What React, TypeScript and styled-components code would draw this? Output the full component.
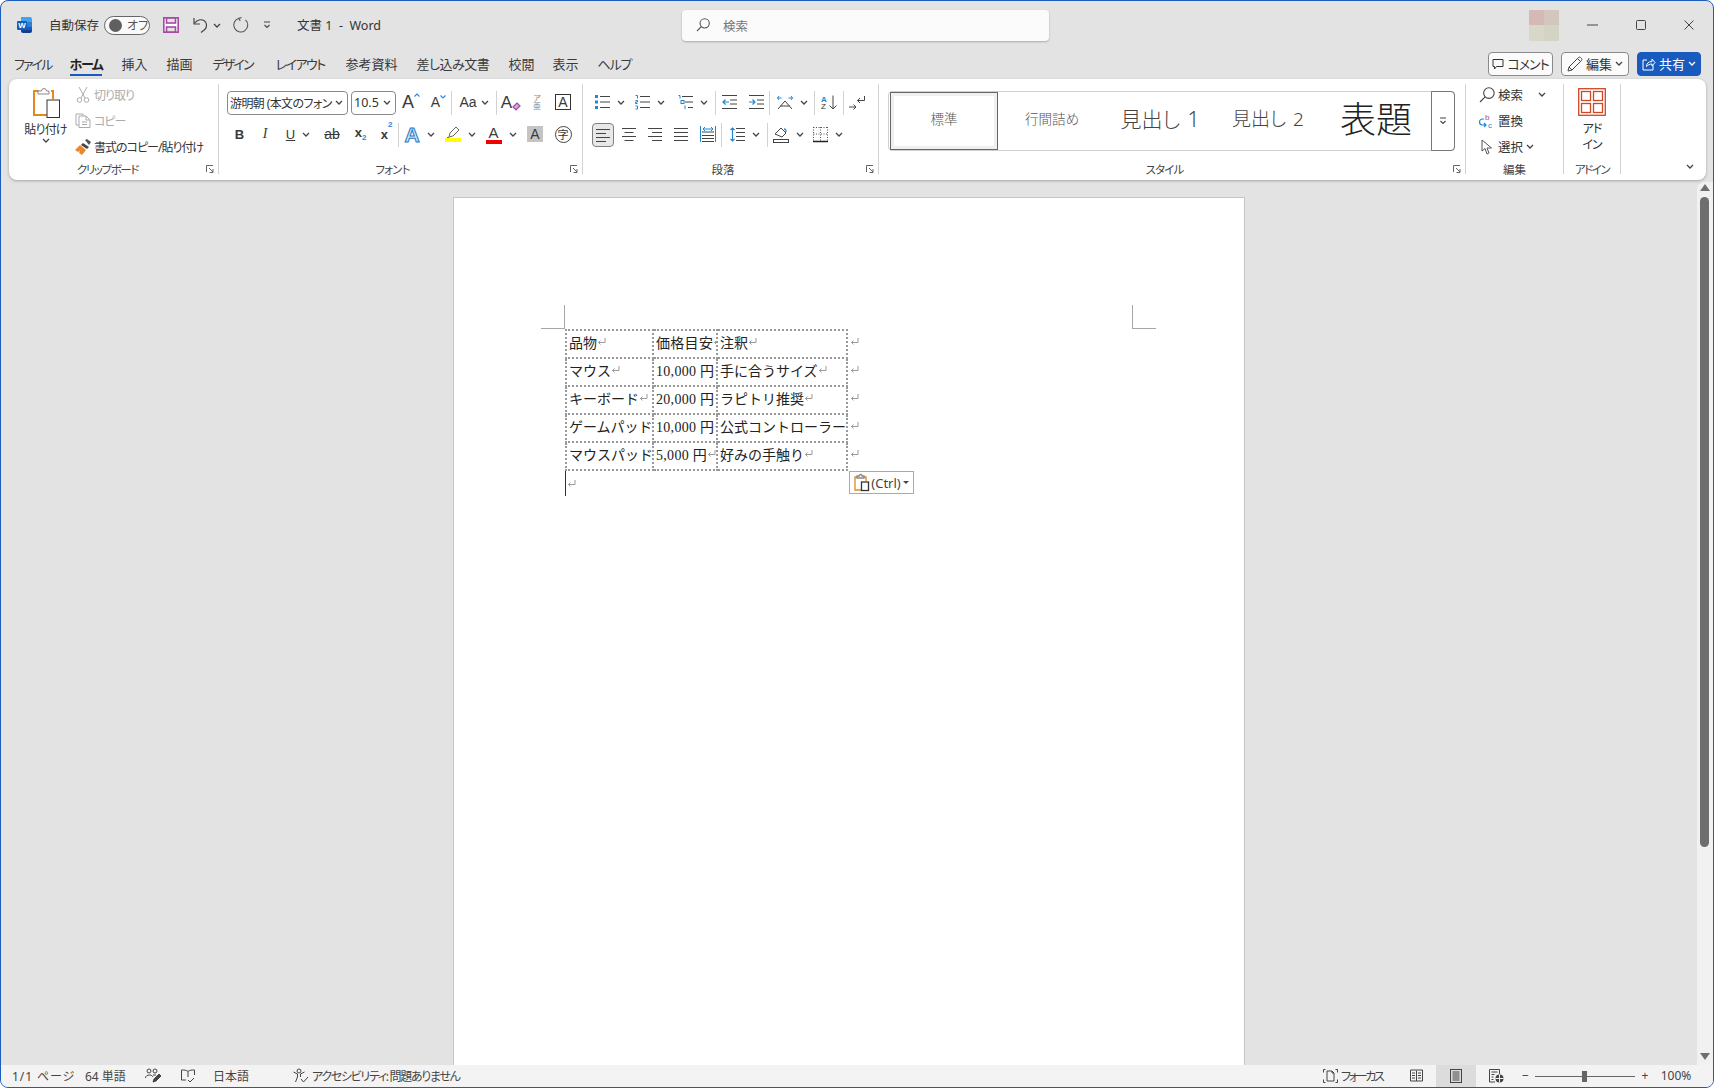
import React from 'react';
import styled, { createGlobalStyle } from 'styled-components';

const uiFont = `"Noto Sans", "Noto Sans CJK JP", sans-serif`;
const docFont = `"Liberation Serif", "Noto Sans CJK JP", serif`;
const latin = `"Liberation Sans", sans-serif`;

const GlobalStyle = createGlobalStyle`
  html, body {
    margin: 0;
    padding: 0;
    background: #fff;
  }
  body {
    font-family: ${uiFont};
    font-feature-settings: "palt";
    color: #3a3a3a;
    font-size: 12px;
    overflow: hidden;
  }
  * { box-sizing: border-box; }
  svg { display: block; flex: none; overflow: visible; }
`;

const Window = styled.div`
  width: 1714px;
  height: 1088px;
  display: flex;
  flex-direction: column;
  background: #e3e3e3;
  border: 1px solid #1a5dbd;
  border-radius: 8px;
  overflow: hidden;
`;

/* title bar */
const TitleBar = styled.header`
  height: 48px;
  flex: none;
  display: flex;
  align-items: center;
  padding-left: 16px;
`;

const Spaced = styled.div<{ $ml: number }>`
  margin-left: ${(p) => p.$ml}px;
  display: flex;
  align-items: center;
  flex: none;
`;

const TitleText = styled.span<{ $w: number }>`
  width: ${(p) => p.$w}px;
  margin-top: -2px;
  font-size: 12.5px;
  white-space: nowrap;
  color: #333;
`;

const Toggle = styled.div`
  width: 46px;
  height: 19px;
  border: 1px solid #666;
  border-radius: 10px;
  background: #fafafa;
  display: flex;
  align-items: center;
  padding-left: 4px;
  font-size: 12px;
  white-space: nowrap;
  gap: 5px;
  color: #555;
`;

const ToggleKnob = styled.span`
  width: 13px;
  height: 13px;
  flex: none;
  border-radius: 50%;
  background: #5f5f5f;
`;

const SearchBox = styled.div`
  width: 367px;
  height: 31px;
  background: #fbfbfb;
  border-radius: 4px;
  box-shadow: 0 1px 2px rgba(0, 0, 0, 0.25);
  display: flex;
  align-items: center;
  padding-left: 14px;
  gap: 13px;
  color: #777;
  font-size: 12.5px;
`;

const Avatar = styled.div`
  width: 30px;
  height: 31px;
  display: grid;
  grid-template-columns: 1fr 1fr;
  grid-template-rows: 1fr 1fr;
`;

const AvatarCell = styled.span<{ $c: string }>`
  background: ${(p) => p.$c};
`;

/* tab row */
const TabRow = styled.nav`
  height: 30px;
  flex: none;
  display: flex;
  padding: 0 12px 0 13px;
`;

const Tab = styled.div<{ $w: number }>`
  width: ${(p) => p.$w}px;
  padding-top: 7px;
  flex: none;
`;

const TabText = styled.span<{ $active?: boolean; $ls: number }>`
  display: inline-block;
  font-size: 13px;
  line-height: 17px;
  height: 20px;
  letter-spacing: ${(p) => p.$ls}px;
  white-space: nowrap;
  color: ${(p) => (p.$active ? '#222' : '#3a3a3a')};
  font-weight: ${(p) => (p.$active ? 700 : 400)};
  border-bottom: 2px solid ${(p) => (p.$active ? '#185abd' : 'transparent')};
`;

const TabActions = styled.div`
  margin-left: auto;
  display: flex;
  gap: 8px;
  padding-top: 3px;
`;

const ActionButton = styled.div<{ $w: number; $primary?: boolean; $ls?: number }>`
  width: ${(p) => p.$w}px;
  height: 24px;
  border-radius: 4px;
  border: 1px solid ${(p) => (p.$primary ? '#185abd' : '#8a8a8a')};
  background: ${(p) => (p.$primary ? '#185abd' : '#fbfbfb')};
  color: ${(p) => (p.$primary ? '#fff' : '#333')};
  display: flex;
  align-items: center;
  justify-content: center;
  gap: 3px;
  font-size: 13px;
  letter-spacing: ${(p) => p.$ls ?? 0}px;
  white-space: nowrap;
  padding-bottom: 1px;
`;

/* ribbon */
const Ribbon = styled.section`
  flex: none;
  height: 101px;
  margin: 0 7px 0 8px;
  padding: 5px 0 6px;
  background: #fff;
  border-radius: 8px;
  box-shadow: 0 1px 3px rgba(0, 0, 0, 0.28);
  display: flex;
`;

const Group = styled.div<{ $w: number }>`
  position: relative;
  width: ${(p) => p.$w}px;
  height: 90px;
  flex: none;
  border-right: 1px solid #d2d2d2;
`;

const GroupLabel = styled.div<{ $ls?: number; $pr?: number }>`
  position: absolute;
  left: 0;
  right: 0;
  bottom: -2px;
  padding-right: ${(p) => p.$pr ?? 0}px;
  text-align: center;
  font-size: 11.5px;
  line-height: 12px;
  letter-spacing: ${(p) => p.$ls ?? 0}px;
  color: #444;
  white-space: nowrap;
`;

const Launcher = styled.div`
  position: absolute;
  right: 4px;
  bottom: 1px;
`;

const GroupRow = styled.div`
  display: flex;
  height: 76px;
`;

const PasteColumn = styled.div`
  width: 65px;
  padding: 3px 0 0 8px;
  display: flex;
  flex-direction: column;
  align-items: center;
  font-size: 12px;
  color: #333;
`;

const PasteSlot = styled.span`
  margin-left: 2px;
`;

const PasteLabel = styled.span`
  margin-top: 3px;
  line-height: 17px;
  letter-spacing: -0.8px;
  white-space: nowrap;
`;

const SmallColumn = styled.div<{ $pl?: number }>`
  display: flex;
  flex-direction: column;
  gap: 4px;
  padding-left: ${(p) => p.$pl ?? 0}px;
`;

const SmallItem = styled.div<{ $off?: boolean; $tight?: boolean }>`
  height: 22px;
  display: flex;
  align-items: center;
  gap: 3px;
  font-size: ${(p) => (p.$tight ? 12 : 12.5)}px;
  letter-spacing: ${(p) => (p.$tight ? -1 : 0)}px;
  padding-bottom: 1px;
  white-space: nowrap;
  color: ${(p) => (p.$off ? '#ababab' : '#333')};
`;

const IconSlot = styled.span<{ $w: number }>`
  width: ${(p) => p.$w}px;
  display: flex;
  justify-content: center;
  flex: none;
`;

const ToolStack = styled.div<{ $pl: number }>`
  padding: 7px 0 0 ${(p) => p.$pl}px;
  display: flex;
  flex-direction: column;
  gap: 8px;
`;

const ToolRow = styled.div`
  height: 24px;
  display: flex;
  align-items: center;
`;

const Tool = styled.div<{ $w: number; $gap?: number }>`
  width: ${(p) => p.$w}px;
  height: 24px;
  flex: none;
  display: flex;
  align-items: center;
  justify-content: center;
  gap: ${(p) => p.$gap ?? 7}px;
  padding-bottom: 2px;
`;

const PressedBox = styled.div`
  width: 22px;
  height: 24px;
  flex: none;
  margin-top: 2px;
  border: 1px solid #7f7f7f;
  border-radius: 4px;
  background: #e8e8e8;
  display: flex;
  align-items: center;
  justify-content: center;
`;

const ToolSep = styled.span`
  width: 1px;
  height: 24px;
  background: #d2d2d2;
  flex: none;
`;

const ComboBox = styled.div<{ $w: number; $ls?: number; $size?: number }>`
  width: ${(p) => p.$w}px;
  height: 24px;
  border: 1px solid #8a8a8a;
  border-radius: 4px;
  display: flex;
  align-items: center;
  justify-content: space-between;
  padding: 0 4px 1px 2px;
  font-size: ${(p) => p.$size ?? 12.5}px;
  letter-spacing: ${(p) => p.$ls ?? 0}px;
  white-space: nowrap;
  color: #333;
  flex: none;
`;

const Letter = styled.span<{
  $size: number;
  $color?: string;
  $bold?: boolean;
  $italic?: boolean;
  $under?: boolean;
  $strike?: boolean;
  $serif?: boolean;
  $outline?: string;
}>`
  font-family: ${(p) => (p.$serif ? `"Liberation Serif", serif` : latin)};
  font-size: ${(p) => p.$size}px;
  line-height: 1;
  color: ${(p) => p.$color ?? '#3a3a3a'};
  font-weight: ${(p) => (p.$bold ? 700 : 400)};
  font-style: ${(p) => (p.$italic ? 'italic' : 'normal')};
  text-decoration: ${(p) => (p.$under ? 'underline' : p.$strike ? 'line-through' : 'none')};
  -webkit-text-stroke: ${(p) => (p.$outline ? `1px ${p.$outline}` : '0')};
`;

const LetterWrap = styled.span<{ $low?: boolean }>`
  display: flex;
  align-items: ${(p) => (p.$low ? 'flex-end' : 'flex-start')};
`;

const Script = styled.span<{ $up?: boolean }>`
  font-family: ${latin};
  font-size: 8px;
  line-height: 1;
  color: #2b88d8;
  margin-top: ${(p) => (p.$up ? -7 : 8)}px;
  font-weight: 700;
`;

const Furigana = styled.span`
  display: flex;
  flex-direction: column;
  align-items: center;
  color: #8a8a8a;
  line-height: 8px;
  font-size: 8px;
`;

const BoxLetter = styled.span`
  width: 16px;
  height: 16px;
  border: 1px solid #333;
  display: flex;
  align-items: center;
  justify-content: center;
`;

const ColorLetter = styled.span<{ $bar: string }>`
  width: 16px;
  display: flex;
  flex-direction: column;
  align-items: center;
  line-height: 1;
  &::after {
    content: '';
    width: 16px;
    height: 4px;
    background: ${(p) => p.$bar};
  }
`;

const ShadedLetter = styled.span`
  width: 16px;
  height: 16px;
  background: #c4c4c4;
  display: flex;
  align-items: center;
  justify-content: center;
`;

const CircleLetter = styled.span`
  width: 17px;
  height: 17px;
  border: 1px solid #444;
  border-radius: 50%;
  display: flex;
  align-items: center;
  justify-content: center;
  font-size: 11px;
  line-height: 1;
  color: #333;
`;

/* style gallery */
const Gallery = styled.div`
  margin: 7px 0 0 9px;
  width: 567px;
  height: 60px;
  border: 1px solid #d0d0d0;
  border-radius: 4px;
  display: flex;
  align-items: stretch;
  padding-left: 1px;
`;

const GalleryItem = styled.div<{ $size: number; $active?: boolean; $color?: string }>`
  width: 108px;
  flex: none;
  display: flex;
  align-items: center;
  justify-content: center;
  padding-bottom: 3px;
  font-size: ${(p) => p.$size}px;
  font-weight: 300;
  word-spacing: 2px;
  color: ${(p) => p.$color ?? '#333'};
  border: ${(p) => (p.$active ? '1px solid #666' : 'none')};
  box-shadow: ${(p) => (p.$active ? 'inset 0 0 0 3px #f0f0f0' : 'none')};
  white-space: nowrap;
  line-height: 1;
`;

const GalleryMore = styled.div`
  width: 24px;
  margin: -1px -1px -1px auto;
  border: 1px solid #777;
  border-radius: 0 4px 4px 0;
  display: flex;
  align-items: center;
  justify-content: center;
`;

const AddInColumn = styled.div`
  padding-top: 4px;
  display: flex;
  flex-direction: column;
  align-items: center;
  font-size: 12px;
  line-height: 16px;
  letter-spacing: -1px;
  text-align: center;
  color: #333;
`;

const AddInText = styled.span`
  margin-top: 5px;
`;

const RibbonEnd = styled.div`
  flex: 1;
  display: flex;
  align-items: flex-end;
  justify-content: flex-end;
  padding: 0 12px 5px 0;
`;

/* document area */
const Workspace = styled.main`
  flex: 1;
  min-height: 0;
  display: flex;
`;

const PageArea = styled.div`
  flex: 1;
  min-width: 0;
  padding-top: 17px;
  display: flex;
  justify-content: center;
`;

const Page = styled.div`
  width: 792px;
  background: #fff;
  border: 1px solid #c6c6c6;
  border-bottom: none;
  padding: 131px 0 0 111px;
  position: relative;
`;

const CropMark = styled.div<{ $right?: boolean }>`
  position: absolute;
  top: 107px;
  width: 24px;
  height: 24px;
  border-bottom: 1px solid #a6a6a6;
  ${(p) =>
    p.$right
      ? 'left: 678px; border-left: 1px solid #a6a6a6;'
      : 'left: 87px; border-right: 1px solid #a6a6a6;'}
`;

const DocTable = styled.table`
  border-collapse: collapse;
  table-layout: fixed;
  width: 304px;
  font-family: ${docFont};
  font-feature-settings: normal;
  font-size: 14px;
  color: #222;
`;

const DocCell = styled.td<{ $w: number; $bare?: boolean; $ls?: number }>`
  width: ${(p) => p.$w}px;
  height: 28px;
  padding: 0 0 5px 2px;
  white-space: nowrap;
  overflow: hidden;
  letter-spacing: ${(p) => p.$ls ?? 0}px;
  border: ${(p) => (p.$bare ? 'none' : '2px dotted #999')};
`;

const CellInner = styled.span`
  display: inline-flex;
  align-items: center;
`;

const CursorLine = styled.div`
  width: 200px;
  height: 25px;
  border-left: 1px solid #333;
  padding: 8px 0 0 1px;
`;

const PasteTag = styled.div`
  position: absolute;
  left: 395px;
  top: 273px;
  width: 65px;
  height: 23px;
  background: #fff;
  border: 1px solid #aaa;
  display: flex;
  align-items: center;
  justify-content: center;
  gap: 2px;
  font-size: 13px;
  color: #444;
`;

const Caret = styled.span`
  width: 0;
  height: 0;
  border-left: 3px solid transparent;
  border-right: 3px solid transparent;
  border-top: 3px solid #444;
`;

const ScrollTrack = styled.aside`
  width: 16px;
  flex: none;
  margin-top: 2px;
  background: #f1f1f1;
  border-radius: 8px 0 0 0;
  display: flex;
  flex-direction: column;
  align-items: center;
  padding: 2px 1px 5px 0;
`;

const ScrollArrow = styled.span<{ $down?: boolean }>`
  width: 0;
  height: 0;
  border-left: 5px solid transparent;
  border-right: 5px solid transparent;
  ${(p) => (p.$down ? 'border-top: 7px solid #6e6e6e; margin-top: auto;' : 'border-bottom: 7px solid #6e6e6e;')}
`;

const ScrollThumb = styled.div`
  width: 9px;
  height: 650px;
  margin-top: 6px;
  background: #6e6e6e;
  border-radius: 5px;
`;

/* status bar */
const StatusBar = styled.footer`
  height: 22px;
  flex: none;
  background: #f3f3f3;
  display: flex;
  align-items: center;
  padding: 0 16px 0 11px;
  font-size: 12px;
  color: #444;
`;

const StatusItem = styled.div<{ $w?: number; $center?: boolean; $active?: boolean; $ls?: number }>`
  ${(p) => (p.$w ? `width: ${p.$w}px;` : '')}
  height: 22px;
  flex: none;
  display: flex;
  align-items: center;
  gap: 3px;
  padding-bottom: 1px;
  letter-spacing: ${(p) => p.$ls ?? 0}px;
  white-space: nowrap;
  justify-content: ${(p) => (p.$center ? 'center' : 'flex-start')};
  background: ${(p) => (p.$active ? '#dcdcdc' : 'transparent')};
`;

const StatusRight = styled.div`
  margin-left: auto;
  display: flex;
  align-items: center;
`;

const Slider = styled.div`
  position: relative;
  width: 100px;
  height: 1px;
  background: #666;
`;

const SliderThumb = styled.span`
  position: absolute;
  left: 47px;
  top: -5px;
  width: 5px;
  height: 11px;
  background: #666;
`;

/* icons */
type IcProps = { w: number; h: number; stroke?: string; sw?: number; children: React.ReactNode };

const Ic = ({ w, h, stroke = '#444', sw = 1, children }: IcProps) => (
  <svg width={w} height={h} viewBox={`0 0 ${w} ${h}`} fill="none" stroke={stroke} strokeWidth={sw}>
    {children}
  </svg>
);

const Chev = ({ color = '#444' }: { color?: string }) => (
  <Ic w={8} h={5} stroke={color} sw={1.3}>
    <path d="M1 1l3 3 3-3" />
  </Ic>
);

const WordLogo = () => (
  <Ic w={15} h={16} stroke="none">
    <path d="M4 0h9a2 2 0 012 2v4H4z" fill="#41a5ee" />
    <rect x="4" y="5" width="11" height="5" fill="#2b7cd3" />
    <rect x="4" y="10" width="11" height="3" fill="#185abd" />
    <path d="M4 13h11v1a2 2 0 01-2 2H6a2 2 0 01-2-2z" fill="#103f91" />
    <rect x="0" y="4" width="10" height="9" rx="1" fill="#185abd" />
    <text x="5" y="11" fontSize="8" fontWeight="700" fill="#fff" textAnchor="middle" fontFamily={latin}>W</text>
  </Ic>
);

const SaveIcon = () => (
  <Ic w={16} h={16} stroke="#a54aa5" sw={1.6}>
    <rect x="0.8" y="0.8" width="14.4" height="14.4" fill="#fff" />
    <rect x="3.5" y="1" width="9" height="5" fill="#e3e3e3" />
    <rect x="3.5" y="10" width="9" height="5" fill="#e3e3e3" />
  </Ic>
);

const UndoIcon = () => (
  <Ic w={15} h={16} stroke="#444" sw={1.2}>
    <path d="M1 1v6h6" />
    <path d="M1.3 6.5C4 3 8 1.8 11 3.6c3 2 3.4 6 .8 9L8 15.5" />
  </Ic>
);

const RedoIcon = () => (
  <Ic w={16} h={16} stroke="#555" sw={1.1}>
    <path d="M6 1.2A7 7 0 1012.5 2.8" />
    <path d="M8.5 0.6L5.8 1.3l1.4 2.6" />
  </Ic>
);

const CustomizeIcon = () => (
  <Ic w={8} h={8} stroke="#444" sw={1.1}>
    <path d="M1 1h6M1.5 4L4 6.5 6.5 4" />
  </Ic>
);

const SearchGlass = ({ w = 14, color = '#555' }: { w?: number; color?: string }) => (
  <Ic w={w} h={w} stroke={color} sw={1.1}>
    <circle cx={w * 0.62} cy={w * 0.38} r={w * 0.33} />
    <path d={`M${w * 0.38} ${w * 0.62}L1 ${w - 1}`} />
  </Ic>
);

const MinimizeIcon = () => (
  <Ic w={11} h={2}>
    <path d="M0 1h11" />
  </Ic>
);

const MaximizeIcon = () => (
  <Ic w={10} h={10}>
    <rect x="0.5" y="0.5" width="9" height="9" rx="1" />
  </Ic>
);

const CloseIcon = () => (
  <Ic w={10} h={10}>
    <path d="M0.5 0.5l9 9M9.5 0.5l-9 9" />
  </Ic>
);

const CommentIcon = () => (
  <Ic w={12} h={12} stroke="#333">
    <path d="M1 1.5h10v7H4.5L2.5 11V8.5H1z" />
  </Ic>
);

const PencilIcon = () => (
  <Ic w={16} h={16} stroke="#444">
    <path d="M1 15l1-4L11.5 1.5a1.5 1.5 0 012 0l1 1a1.5 1.5 0 010 2L5 14z" />
    <path d="M2 11l3 3M10.5 2.5l3 3" />
  </Ic>
);

const ShareIcon = () => (
  <Ic w={14} h={14} stroke="#fff">
    <path d="M5 3H1v10h10V8" />
    <path d="M4.5 9.5c0-3 2-5 5.5-5V2l3 3.5L10 9V7c-2.5 0-4 1-5.5 2.5z" />
  </Ic>
);

const PasteIcon = () => (
  <svg width={27} height={31} viewBox="0 0 27 31" fill="none">
    <path d="M6 4H1v24h13" stroke="#e3881e" strokeWidth="2" />
    <path d="M18 4h2v8" stroke="#e3881e" strokeWidth="2" />
    <path d="M5 7V4h3.5a2.5 2.5 0 015 0H16v3z" fill="#fff" stroke="#8a8a8a" />
    <rect x="14" y="13" width="12.5" height="17.5" fill="#fff" stroke="#333" />
  </svg>
);

const PasteSmall = () => (
  <Ic w={15} h={17} stroke="#e3881e" sw={1.3}>
    <path d="M3 3H1v13h6M10 3h2v4" />
    <path d="M3 4V2h2a1.5 1.5 0 013 0h2v2z" stroke="#888" fill="#fff" />
    <rect x="7.5" y="8" width="7" height="8.5" stroke="#333" fill="#fff" />
  </Ic>
);

const CutIcon = () => (
  <Ic w={14} h={17} stroke="#ababab">
    <path d="M3 1l6 11M11 1L5 12" />
    <circle cx="3.5" cy="14" r="2.3" />
    <circle cx="10.5" cy="14" r="2.3" />
  </Ic>
);

const CopyIcon = () => (
  <Ic w={16} h={15} stroke="#ababab">
    <path d="M4 12H1V1h7v2" />
    <path d="M4 3h7l4 4v7.5H4zM11 3v4h4M7 9h5M7 11.5h5" />
  </Ic>
);

const BrushIcon = () => (
  <Ic w={16} h={16} stroke="none">
    <path d="M10 1l2-1 4 3-2 3z" fill="#555" />
    <path d="M8 4l6 4-2 2-6-4z" fill="#444" />
    <path d="M5 6l6 5-4 5-3-2 1-2-2 1-3-2z" fill="#f0862a" />
  </Ic>
);

const Launch = () => (
  <Ic w={8} h={8} stroke="#666">
    <path d="M0.5 7V0.5H7M3 3l4 4M7 4v3.5H3.5" />
  </Ic>
);

const TinyCaret = ({ up }: { up?: boolean }) => (
  <Ic w={6} h={4} stroke="#2b88d8" sw={1.1}>
    <path d={up ? 'M0.5 3.5L3 1l2.5 2.5' : 'M0.5 0.5L3 3l2.5-2.5'} />
  </Ic>
);

const EraserMark = () => (
  <Ic w={9} h={9} stroke="#a54aa5" sw={1.2}>
    <path d="M5 1l3 3-4 4-3-3z" fill="#d7a8d7" />
  </Ic>
);

const HighlightPen = () => (
  <Ic w={14} h={12} stroke="#666">
    <path d="M3 11l1-4L10 1l3 3-6 6z" />
    <path d="M1 11.5h2" />
  </Ic>
);

const lines = (ys: number[], x1: number, x2: number) => ys.map((y) => `M${x1} ${y}H${x2}`).join('');

const BulletIcon = () => (
  <Ic w={15} h={14}>
    <path d={lines([1.5, 7, 12.5], 5, 15)} />
    <rect x="0" y="0" width="3" height="3" fill="#1e88d2" stroke="none" />
    <rect x="0" y="5.5" width="3" height="3" fill="#1e88d2" stroke="none" />
    <rect x="0" y="11" width="3" height="3" fill="#1e88d2" stroke="none" />
  </Ic>
);

const NumberIcon = () => (
  <Ic w={15} h={14}>
    <path d={lines([1.5, 7, 12.5], 5, 15)} />
    <path d="M0.5 0.5h2v3M0.5 5.5h2v1.5h-2v1.5h2M0.5 11h2v3h-2" stroke="#1e88d2" />
  </Ic>
);

const MultiIcon = () => (
  <Ic w={15} h={14}>
    <path d="M4 1.5h11M7 7h8M10 12.5h5" />
    <path d="M0.5 0.5h1.5v3" stroke="#1e88d2" />
    <rect x="3" y="5.5" width="3" height="3" stroke="#1e88d2" />
    <path d="M7 10.5v3.5" stroke="#1e88d2" />
  </Ic>
);

const IndentIcon = ({ out }: { out?: boolean }) => (
  <Ic w={15} h={14}>
    <path d={lines([0.5, 13.5], 0, 15) + lines([5, 9], 8, 15)} />
    <path d={out ? 'M7 7H1M3.5 4.5L1 7l2.5 2.5' : 'M0 7h6M3.5 4.5L6 7 3.5 9.5'} stroke="#1e88d2" strokeWidth={1.2} />
  </Ic>
);

const AsianLayoutIcon = () => (
  <Ic w={16} h={15}>
    <path d="M1 14L8 6l7 8M3 11h10" />
    <path d="M0.5 3h4M2 1L0.5 3 2 5M11.5 3h4M14 1l1.5 2L14 5" stroke="#1e88d2" />
  </Ic>
);

const SortIcon = () => (
  <Ic w={16} h={15} stroke="#444">
    <text x="0" y="6.5" fontSize="8" fill="#1e88d2" stroke="none" fontWeight="700" fontFamily={latin}>A</text>
    <text x="0" y="14" fontSize="8" fill="#333" stroke="none" fontFamily={latin}>Z</text>
    <path d="M12 0.5V14M8.5 10.5L12 14l3.5-3.5" />
  </Ic>
);

const EnterIcon = () => (
  <Ic w={16} h={15}>
    <path d="M15.5 1v4.5H8.5M11 3L8.5 5.5 11 8" />
    <path d="M0 12h7M4.5 9.5L7 12l-2.5 2.5" />
  </Ic>
);

const AlignIcon = ({ kind }: { kind: 'left' | 'center' | 'right' | 'justify' }) => {
  const short: Record<string, [number, number]> = {
    left: [0, 10],
    center: [2.5, 11.5],
    right: [4, 14],
    justify: [0, 14],
  };
  const [a, b] = short[kind];
  return (
    <Ic w={14} h={13}>
      <path d={lines([0.5, 8.5], 0, 14) + lines([4.5, 12.5], a, b)} />
    </Ic>
  );
};

const DistributeIcon = () => (
  <Ic w={16} h={16}>
    <path d="M0.5 0v16M15.5 0v16" stroke="#1e88d2" />
    <path d={lines([6, 9.5, 12.5, 15.5], 2, 14)} />
    <path d="M3 3h10M5 1L3 3l2 2M11 1l2 2-2 2" stroke="#1e88d2" />
  </Ic>
);

const LineSpacingIcon = () => (
  <Ic w={15} h={15}>
    <path d={lines([1.5, 5.5, 9.5, 13.5], 6, 15)} />
    <path d="M2.5 1v13M0.5 3l2-2 2 2M0.5 12l2 2 2-2" stroke="#1e88d2" strokeWidth={1.2} />
  </Ic>
);

const FillIcon = () => (
  <Ic w={16} h={17}>
    <path d="M2 8l6-6 5 5-4 4z" />
    <path d="M13 6c0-2 0-3-2-3" stroke="#1e88d2" strokeWidth={1.4} />
    <rect x="0.5" y="13.5" width="15" height="3" />
  </Ic>
);

const BorderIcon = () => (
  <Ic w={15} h={15}>
    <path d="M0.5 0.5h14M0.5 7h14M7.5 0v14M0.5 0v14M14.5 0v14" strokeDasharray="1 1.5" stroke="#555" />
    <path d="M0 14.5h15" stroke="#222" strokeWidth={1.3} />
  </Ic>
);

const ReplaceIcon = () => (
  <Ic w={15} h={16}>
    <text x="6" y="7" fontSize="8" fill="#a54aa5" stroke="none" fontFamily={latin}>b</text>
    <text x="9" y="15" fontSize="8" fill="#1e88d2" stroke="none" fontFamily={latin}>c</text>
    <path d="M5 6H3.5a2.5 2.5 0 000 6H7M5 10l2 2-2 2" stroke="#1e88d2" strokeWidth={1.2} />
  </Ic>
);

const SelectIcon = () => (
  <Ic w={12} h={16} stroke="#555">
    <path d="M1 1v11l3-2.5L6 15l2-1-2-5h4.5z" />
  </Ic>
);

const AddInIcon = () => (
  <Ic w={28} h={28} stroke="#d24726" sw={1.3}>
    <rect x="0.7" y="0.7" width="26.6" height="26.6" />
    <rect x="3.5" y="3.5" width="9" height="9" />
    <rect x="15.5" y="3.5" width="9" height="9" />
    <rect x="3.5" y="15.5" width="9" height="9" />
    <rect x="15.5" y="15.5" width="9" height="9" />
  </Ic>
);

const ReturnMark = () => (
  <Ic w={9} h={9} stroke="#9a9a9a">
    <path d="M8 1v4.5H1.5M3.5 3.5l-2 2 2 2" />
  </Ic>
);

const TrackIcon = () => (
  <Ic w={16} h={15}>
    <circle cx="4" cy="3" r="2" />
    <circle cx="10" cy="3" r="2" />
    <path d="M0.5 10c0-2 2-3 4-3s3 1 3.5 2M8 7h3" />
    <path d="M8 14l1-3 5-5 2 2-5 5z" fill="#444" />
  </Ic>
);

const ProofIcon = () => (
  <Ic w={14} h={14}>
    <path d="M7 2.5C5.5 1 3 1 0.5 1v10H5M7 2.5C8.5 1 11 1 13.5 1v5M7 2.5V8" />
    <path d="M7 11l2 2 4-4" />
  </Ic>
);

const A11yIcon = () => (
  <Ic w={16} h={16}>
    <circle cx="6" cy="3" r="2" />
    <path d="M0.5 4l4 2v3l-2 5M11.5 4l-4 2v3" />
    <path d="M8 11l2.5 3 4.5-5" />
  </Ic>
);

const FocusIcon = () => (
  <Ic w={15} h={14}>
    <path d="M2.5 0.5h-2v3M12.5 0.5h2v3M2.5 13.5h-2v-3M12.5 13.5h2v-3" />
    <path d="M4 12V2h5l2 2v8zM9 2v2h2" />
  </Ic>
);

const ReadIcon = () => (
  <Ic w={13} h={13}>
    <path d="M6.5 1.5V12M0.5 1h6M6.5 1h6M0.5 12h12M0.5 1v11M12.5 1v11M2 4h3M2 6.5h3M2 9h3M8 4h3M8 6.5h3M8 9h3" />
  </Ic>
);

const PrintIcon = () => (
  <Ic w={12} h={14}>
    <rect x="0.5" y="0.5" width="11" height="13" />
    <path d={lines([3, 5, 7, 9, 11], 2.5, 9.5)} />
  </Ic>
);

const WebIcon = () => (
  <Ic w={15} h={14}>
    <path d="M6 13H0.5V0.5h10V5M2.5 3h6M2.5 5.5h3M2.5 8h2M2.5 10.5h2" />
    <circle cx="10.5" cy="9.5" r="4" fill="#444" stroke="none" />
    <path d="M6.5 9.5h8M10.5 5.5v8" stroke="#f3f3f3" />
  </Ic>
);

const TabItems: [string, number, number][] = [
  ['ファイル', 55.5, -1.9],
  ['ホーム', 52, -1.4],
  ['挿入', 45, 0],
  ['描画', 46, 0],
  ['デザイン', 63, -1.9],
  ['レイアウト', 70, -1.5],
  ['参考資料', 71, 0],
  ['差し込み文書', 92, -0.5],
  ['校閲', 44, 0],
  ['表示', 45, 0],
  ['ヘルプ', 45, -1.1],
];

const TableRows = [
  ['品物', '価格目安', '注釈'],
  ['マウス', '10,000 円', '手に合うサイズ'],
  ['キーボード', '20,000 円', 'ラピトリ推奨'],
  ['ゲームパッド', '10,000 円', '公式コントローラー'],
  ['マウスパッド', '5,000 円', '好みの手触り'],
];

const ColumnWidths = [87, 64, 130];

const App = () => (
  <>
    <GlobalStyle />
    <Window>
      <TitleBar>
        <WordLogo />
        <Spaced $ml={17}>
          <TitleText $w={48}>自動保存</TitleText>
        </Spaced>
        <Spaced $ml={7}>
          <Toggle>
            <ToggleKnob />
            オフ
          </Toggle>
        </Spaced>
        <Spaced $ml={13}><SaveIcon /></Spaced>
        <Spaced $ml={14}><UndoIcon /></Spaced>
        <Spaced $ml={5}><Chev /></Spaced>
        <Spaced $ml={12}><RedoIcon /></Spaced>
        <Spaced $ml={14}><CustomizeIcon /></Spaced>
        <Spaced $ml={26}>
          <TitleText $w={85}>文書 1{'\u00a0\u00a0'}-{'\u00a0\u00a0'}Word</TitleText>
        </Spaced>
        <Spaced $ml={300}>
          <SearchBox>
            <SearchGlass />
            検索
          </SearchBox>
        </Spaced>
        <Spaced $ml={480}>
          <Avatar>
            <AvatarCell $c="#d5b9b7" />
            <AvatarCell $c="#d3c6bc" />
            <AvatarCell $c="#d9d8c8" />
            <AvatarCell $c="#d4d4c4" />
          </Avatar>
        </Spaced>
        <Spaced $ml={28}><MinimizeIcon /></Spaced>
        <Spaced $ml={38}><MaximizeIcon /></Spaced>
        <Spaced $ml={38}><CloseIcon /></Spaced>
      </TitleBar>

      <TabRow>
        {TabItems.map(([label, w, ls]) => (
          <Tab key={label} $w={w}>
            <TabText $active={label === 'ホーム'} $ls={ls}>{label}</TabText>
          </Tab>
        ))}
        <TabActions>
          <ActionButton $w={65} $ls={-1}>
            <CommentIcon />
            コメント
          </ActionButton>
          <ActionButton $w={68}>
            <PencilIcon />
            編集
            <Chev />
          </ActionButton>
          <ActionButton $w={64} $primary>
            <ShareIcon />
            共有
            <Chev color="#fff" />
          </ActionButton>
        </TabActions>
      </TabRow>

      <Ribbon>
        <Group $w={210}>
          <GroupRow>
            <PasteColumn>
              <PasteSlot><PasteIcon /></PasteSlot>
              <PasteLabel>貼り付け</PasteLabel>
              <Chev />
            </PasteColumn>
            <SmallColumn>
              <SmallItem $off $tight>
                <IconSlot $w={17}><CutIcon /></IconSlot>
                切り取り
              </SmallItem>
              <SmallItem $off $tight>
                <IconSlot $w={17}><CopyIcon /></IconSlot>
                コピー
              </SmallItem>
              <SmallItem $tight>
                <IconSlot $w={17}><BrushIcon /></IconSlot>
                書式のコピー/貼り付け
              </SmallItem>
            </SmallColumn>
          </GroupRow>
          <GroupLabel $ls={-1.4} $pr={12}>クリップボード</GroupLabel>
          <Launcher><Launch /></Launcher>
        </Group>

        <Group $w={364}>
          <ToolStack $pl={8}>
            <ToolRow>
              <ComboBox $w={121} $size={12} $ls={-0.6}>游明朝 (本文のフォン<Chev /></ComboBox>
              <Spaced $ml={3}>
                <ComboBox $w={45}>10.5<Chev /></ComboBox>
              </Spaced>
              <Tool $w={30}>
                <LetterWrap>
                  <Letter $size={18}>A</Letter>
                  <TinyCaret up />
                </LetterWrap>
              </Tool>
              <Tool $w={25}>
                <LetterWrap>
                  <Letter $size={14}>A</Letter>
                  <TinyCaret />
                </LetterWrap>
              </Tool>
              <ToolSep />
              <Tool $w={44} $gap={4}>
                <Letter $size={14}>Aa</Letter>
                <Chev />
              </Tool>
              <ToolSep />
              <Tool $w={28}>
                <LetterWrap $low>
                  <Letter $size={17}>A</Letter>
                  <EraserMark />
                </LetterWrap>
              </Tool>
              <Tool $w={24}>
                <Furigana>
                  ア
                  <span>亜</span>
                </Furigana>
              </Tool>
              <Tool $w={28}>
                <BoxLetter><Letter $size={14}>A</Letter></BoxLetter>
              </Tool>
            </ToolRow>
            <ToolRow>
              <Tool $w={25}><Letter $size={13} $bold>B</Letter></Tool>
              <Tool $w={26}><Letter $size={14} $italic $serif>I</Letter></Tool>
              <Tool $w={40}>
                <Letter $size={13} $under>U</Letter>
                <Chev />
              </Tool>
              <Tool $w={28}><Letter $size={14} $strike>ab</Letter></Tool>
              <Tool $w={29}>
                <LetterWrap>
                  <Letter $size={13} $bold>x</Letter>
                  <Script>2</Script>
                </LetterWrap>
              </Tool>
              <Tool $w={23}>
                <LetterWrap>
                  <Letter $size={13} $bold>x</Letter>
                  <Script $up>2</Script>
                </LetterWrap>
              </Tool>
              <ToolSep />
              <Tool $w={41}>
                <Letter $size={21} $bold $color="#cfe6f7" $outline="#1e78c8">A</Letter>
                <Chev />
              </Tool>
              <Tool $w={41}>
                <ColorLetter $bar="#ffff00"><HighlightPen /></ColorLetter>
                <Chev />
              </Tool>
              <Tool $w={40}>
                <ColorLetter $bar="#f00000"><Letter $size={15}>A</Letter></ColorLetter>
                <Chev />
              </Tool>
              <Tool $w={28}>
                <ShadedLetter><Letter $size={14}>A</Letter></ShadedLetter>
              </Tool>
              <Tool $w={28}>
                <CircleLetter>字</CircleLetter>
              </Tool>
            </ToolRow>
          </ToolStack>
          <GroupLabel $ls={-0.8} $pr={16}>フォント</GroupLabel>
          <Launcher><Launch /></Launcher>
        </Group>

        <Group $w={296}>
          <ToolStack $pl={7}>
            <ToolRow>
              <Tool $w={40}><BulletIcon /><Chev /></Tool>
              <Tool $w={40}><NumberIcon /><Chev /></Tool>
              <Tool $w={45}><MultiIcon /><Chev /></Tool>
              <ToolSep />
              <Tool $w={27}><IndentIcon out /></Tool>
              <Tool $w={26}><IndentIcon /></Tool>
              <ToolSep />
              <Tool $w={44}><AsianLayoutIcon /><Chev /></Tool>
              <ToolSep />
              <Tool $w={28}><SortIcon /></Tool>
              <ToolSep />
              <Tool $w={26}><EnterIcon /></Tool>
            </ToolRow>
            <ToolRow>
              <Tool $w={26}><PressedBox><AlignIcon kind="left" /></PressedBox></Tool>
              <Tool $w={26}><AlignIcon kind="center" /></Tool>
              <Tool $w={26}><AlignIcon kind="right" /></Tool>
              <Tool $w={26}><AlignIcon kind="justify" /></Tool>
              <Tool $w={27}><DistributeIcon /></Tool>
              <ToolSep />
              <Tool $w={45}><LineSpacingIcon /><Chev /></Tool>
              <ToolSep />
              <Tool $w={40}><FillIcon /><Chev /></Tool>
              <Tool $w={40}><BorderIcon /><Chev /></Tool>
            </ToolRow>
          </ToolStack>
          <GroupLabel $pr={15}>段落</GroupLabel>
          <Launcher><Launch /></Launcher>
        </Group>

        <Group $w={587}>
          <Gallery>
            <GalleryItem $size={13.5} $active $color="#555">標準</GalleryItem>
            <GalleryItem $size={13.5} $color="#555">行間詰め</GalleryItem>
            <GalleryItem $size={21} $color="#444">見出し 1</GalleryItem>
            <GalleryItem $size={19} $color="#444">見出し 2</GalleryItem>
            <GalleryItem $size={36} $color="#222">表題</GalleryItem>
            <GalleryMore><CustomizeIcon /></GalleryMore>
          </Gallery>
          <GroupLabel $ls={-0.8} $pr={15}>スタイル</GroupLabel>
          <Launcher><Launch /></Launcher>
        </Group>

        <Group $w={98}>
          <SmallColumn $pl={12}>
            <SmallItem>
              <IconSlot $w={17}><SearchGlass w={16} color="#444" /></IconSlot>
              検索
              <Spaced $ml={12}><Chev /></Spaced>
            </SmallItem>
            <SmallItem>
              <IconSlot $w={17}><ReplaceIcon /></IconSlot>
              置換
            </SmallItem>
            <SmallItem>
              <IconSlot $w={17}><SelectIcon /></IconSlot>
              選択
              <Chev />
            </SmallItem>
          </SmallColumn>
          <GroupLabel>編集</GroupLabel>
        </Group>

        <Group $w={57}>
          <AddInColumn>
            <AddInIcon />
            <AddInText>アド<br />イン</AddInText>
          </AddInColumn>
          <GroupLabel $ls={-1.5}>アドイン</GroupLabel>
        </Group>

        <RibbonEnd><Chev /></RibbonEnd>
      </Ribbon>

      <Workspace>
        <PageArea>
          <Page>
            <CropMark />
            <CropMark $right />
            <DocTable>
              <tbody>
                {TableRows.map((row) => (
                  <tr key={row[0]}>
                    {row.map((text, i) => (
                      <DocCell key={text} $w={ColumnWidths[i]} $ls={i === 1 ? 0.3 : 0}>
                        <CellInner>{text}<ReturnMark /></CellInner>
                      </DocCell>
                    ))}
                    <DocCell $w={23} $bare><ReturnMark /></DocCell>
                  </tr>
                ))}
              </tbody>
            </DocTable>
            <CursorLine><ReturnMark /></CursorLine>
            <PasteTag>
              <PasteSmall />
              (Ctrl)
              <Caret />
            </PasteTag>
          </Page>
        </PageArea>
        <ScrollTrack>
          <ScrollArrow />
          <ScrollThumb />
          <ScrollArrow $down />
        </ScrollTrack>
      </Workspace>

      <StatusBar>
        <StatusItem $w={73} $ls={0.9}>1/1 ページ</StatusItem>
        <StatusItem $w={60}>64 単語</StatusItem>
        <StatusItem $w={36}><TrackIcon /></StatusItem>
        <StatusItem $w={32}><ProofIcon /></StatusItem>
        <StatusItem $w={80}>日本語</StatusItem>
        <StatusItem $ls={-1.3}><A11yIcon />アクセシビリティ: 問題ありません</StatusItem>
        <StatusRight>
          <StatusItem $w={73} $ls={-2.3}><FocusIcon />フォーカス</StatusItem>
          <StatusItem $w={40} $center><ReadIcon /></StatusItem>
          <StatusItem $w={40} $center $active><PrintIcon /></StatusItem>
          <StatusItem $w={40} $center><WebIcon /></StatusItem>
          <StatusItem $w={19} $center>−</StatusItem>
          <Slider><SliderThumb /></Slider>
          <StatusItem $w={20} $center>+</StatusItem>
          <StatusItem $w={42} $center>100%</StatusItem>
        </StatusRight>
      </StatusBar>
    </Window>
  </>
);

export default App;
